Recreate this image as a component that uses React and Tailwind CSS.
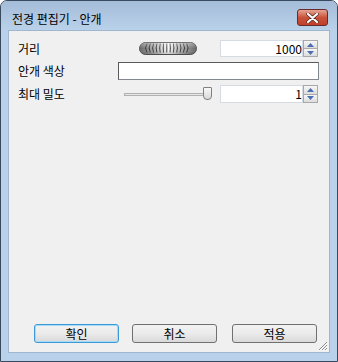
import React from "react";

const font = { fontFamily: '"Noto Sans CJK KR", "Noto Sans", sans-serif' };

function Knob() {
  const ridges = [];
  for (let i = 0; i < 13; i++) {
    const x = 8 + i * 3.3;
    ridges.push(
      <path key={i} d={`M${x} 1.5 Q${x - 3 + (i / 12) * 6} 6 ${x} 10.5`} stroke="#2a2a2a" strokeWidth="0.9" fill="none" />
    );
  }
  return (
    <svg width="58" height="13" viewBox="0 0 58 13">
      <defs>
        <linearGradient id="kg" x1="0" x2="1" y1="0" y2="0">
          <stop offset="0" stopColor="#666" />
          <stop offset="0.25" stopColor="#aaa" />
          <stop offset="0.5" stopColor="#f8f8f8" />
          <stop offset="0.75" stopColor="#aaa" />
          <stop offset="1" stopColor="#666" />
        </linearGradient>
        <linearGradient id="kv" x1="0" x2="0" y1="0" y2="1">
          <stop offset="0" stopColor="#fff" stopOpacity="0.35" />
          <stop offset="0.5" stopColor="#fff" stopOpacity="0" />
          <stop offset="1" stopColor="#000" stopOpacity="0.2" />
        </linearGradient>
      </defs>
      <rect x="0.5" y="0.5" width="57" height="12" rx="6" fill="url(#kg)" stroke="#555" />
      {ridges}
      <rect x="0.5" y="0.5" width="57" height="12" rx="6" fill="url(#kv)" />
    </svg>
  );
}

function Spin() {
  return (
    <div className="flex flex-col w-[15px] h-full">
      <div className="flex-1 flex items-center justify-center border border-[#a9a9a9] bg-gradient-to-b from-[#f7f7f7] to-[#dcdcdc]">
        <svg width="7" height="4" viewBox="0 0 7 4"><path d="M0 4 L3.5 0 L7 4Z" fill="#4b6fb0" /></svg>
      </div>
      <div className="flex-1 flex items-center justify-center border border-t-0 border-[#a9a9a9] bg-gradient-to-b from-[#f7f7f7] to-[#dcdcdc]">
        <svg width="7" height="4" viewBox="0 0 7 4"><path d="M0 0 L3.5 4 L7 0Z" fill="#4b6fb0" /></svg>
      </div>
    </div>
  );
}

function NumInput({ value }) {
  return (
    <div className="flex h-full w-[98px]">
      <div className="flex-1 bg-white border border-[#d5dbe3] flex items-center justify-end text-[12px] leading-none text-black">
        {value}
      </div>
      <Spin />
    </div>
  );
}

function Btn({ children, focus }) {
  return (
    <div
      className={`w-[85px] h-[19px] rounded-[3px] flex items-center justify-center text-[12px] leading-none text-black bg-gradient-to-b from-[#f2f2f2] via-[#ebebeb] to-[#d9d9d9] ${
        focus ? "border border-[#3c9ad8] shadow-[inset_0_0_0_1px_#a6dbf7]" : "border border-[#707070]"
      }`}
    >
      {children}
    </div>
  );
}

export default function App() {
  return (
    <div className="w-[338px] h-[362px] bg-white" style={font}>
      <div className="w-[338px] h-[362px] rounded-t-[7px] border border-[#3a4a5e] bg-[#b9d1ea] flex flex-col overflow-hidden">
        <div className="h-[29px] flex items-start justify-between pl-[11px] pr-[9px] bg-gradient-to-b from-[#a4bcd8] to-[#bad1ea]">
          <span className="text-[12px] text-black leading-none mt-[12px]">전경 편집기 - 안개</span>
          <div className="w-[31px] h-[17px] mt-[8px] rounded-[3px] border border-[#6b2a2a] bg-gradient-to-b from-[#e5a493] via-[#c8523b] to-[#c0402a] flex items-center justify-center">
            <svg width="13" height="10" viewBox="0 0 13 10">
              <path d="M2 1 L11 9 M11 1 L2 9" stroke="#5a2a22" strokeWidth="3.6" strokeLinecap="round" />
              <path d="M2 1 L11 9 M11 1 L2 9" stroke="#fff" strokeWidth="2.2" strokeLinecap="round" />
            </svg>
          </div>
        </div>
        <div className="mx-[7px] h-[323px] bg-[#f0f0f0] border border-[#9fb6cf] relative flex flex-col">
          <div className="flex flex-col gap-[5px] pt-[9px] pl-[9px]">
            <div className="flex h-[17px] items-center">
              <div className="w-[100px] text-[12px] text-black leading-none">거리</div>
              <div className="w-[102px] flex justify-start pl-[21px]"><Knob /></div>
              <NumInput value="1000" />
            </div>
            <div className="flex h-[18px] items-center">
              <div className="w-[100px] text-[12px] text-black leading-none">안개 색상</div>
              <div className="w-[201px] h-[18px] bg-white border border-[#828790] border-t-[#5a5a5a] border-l-[#5a5a5a]" />
            </div>
            <div className="flex h-[18px] items-center">
              <div className="w-[100px] text-[12px] text-black leading-none">최대 밀도</div>
              <div className="w-[102px] h-[18px] flex items-center pl-[6px] relative">
                <div className="w-[82px] h-[3px] border border-[#b0b0b0] bg-[#e7e7e7]" />
                <div className="absolute left-[85px] top-[2px] w-[9px] h-[13px] border border-[#808080] rounded-b-[4px] rounded-t-[1px] bg-gradient-to-b from-[#f8f8f8] to-[#d8d8d8]" />
              </div>
              <NumInput value="1" />
            </div>
          </div>
          <div className="flex-1" />
          <div className="flex pl-[25px] gap-[13px] pb-[9px]">
            <Btn focus>확인</Btn>
            <Btn>취소</Btn>
            <div className="ml-[2px]"><Btn>적용</Btn></div>
          </div>
          <svg className="absolute right-[1px] bottom-[1px]" width="11" height="11" viewBox="0 0 11 11">
            <path d="M10 2 L2 10 M10 5 L5 10 M10 8 L8 10" stroke="#8a8a8a" strokeWidth="1" />
            <path d="M10.8 2.8 L2.8 10.8 M10.8 5.8 L5.8 10.8 M10.8 8.8 L8.8 10.8" stroke="#fff" strokeWidth="1" />
          </svg>
        </div>
        <div className="flex-1" />
      </div>
    </div>
  );
}
